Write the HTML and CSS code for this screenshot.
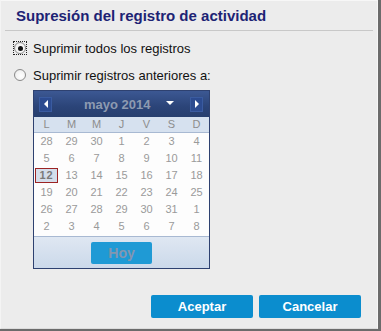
FILE: index.html
```html
<!DOCTYPE html>
<html lang="es">
<head>
<meta charset="utf-8">
<title>Supresión del registro de actividad</title>
<link rel="stylesheet" href="styles.css">
</head>
<body>
<div class="dialog">
  <div class="title">Supresión del registro de actividad</div>
  <div class="sep"></div>
  <div class="options">
    <div class="opt">
      <span class="focus"><span class="radio checked"></span></span>
      <span class="label">Suprimir todos los registros</span>
    </div>
    <div class="opt">
      <span class="nofocus"><span class="radio"></span></span>
      <span class="label">Suprimir registros anteriores a:</span>
    </div>
  </div>
  <div class="cal">
    <div class="cal-head">
      <span class="nav"><svg width="6" height="8" viewBox="0 0 6 8"><path d="M5 0 L1 4 L5 8 Z" fill="#fff"/></svg></span>
      <span class="month">mayo 2014</span>
      <svg class="drop" width="8" height="5" viewBox="0 0 8 5"><path d="M0 0 H8 L4 4 Z" fill="#fff"/></svg>
      <span class="nav next"><svg width="6" height="8" viewBox="0 0 6 8"><path d="M1 0 L5 4 L1 8 Z" fill="#fff"/></svg></span>
    </div>
    <div class="dow">
      <span>L</span><span>M</span><span>M</span><span>J</span><span>V</span><span>S</span><span>D</span>
    </div>
    <div class="days">
      <span>28</span><span>29</span><span>30</span><span>1</span><span>2</span><span>3</span><span>4</span>
      <span>5</span><span>6</span><span>7</span><span>8</span><span>9</span><span>10</span><span>11</span>
      <span class="today">12</span><span>13</span><span>14</span><span>15</span><span>16</span><span>17</span><span>18</span>
      <span>19</span><span>20</span><span>21</span><span>22</span><span>23</span><span>24</span><span>25</span>
      <span>26</span><span>27</span><span>28</span><span>29</span><span>30</span><span>31</span><span>1</span>
      <span>2</span><span>3</span><span>4</span><span>5</span><span>6</span><span>7</span><span>8</span>
    </div>
    <div class="cal-foot">
      <span class="hoy">Hoy</span>
    </div>
  </div>
  <div class="actions">
    <span class="btn">Aceptar</span>
    <span class="btn">Cancelar</span>
  </div>
</div>
</body>
</html>
```
FILE: styles.css
```css
html, body {
  margin: 0;
  padding: 0;
}
body {
  width: 381px;
  height: 331px;
  background: #6b6b6b;
  font-family: "Liberation Sans", Arial, sans-serif;
  overflow: hidden;
}
.dialog {
  box-sizing: border-box;
  width: 378px;
  height: 329px;
  background: #ececec;
  border-top: 1px solid #f7f7f7;
  border-left: 1px solid #f4f4f4;
  border-right: 1px solid #f6f6f6;
  border-bottom: 1px solid #dcdcdc;
  display: flex;
  flex-direction: column;
}
.title {
  padding: 6px 0 0 15px;
  height: 23px;
  box-sizing: border-box;
  font-size: 15px;
  font-weight: bold;
  color: #1d2374;
  line-height: 18px;
}
.sep {
  margin: 6px 4px 0 4px;
  border-top: 1px solid #c8c8c8;
}
.options {
  display: flex;
  flex-direction: column;
  padding: 10px 0 0 12px;
  gap: 13px;
}
.opt {
  display: flex;
  align-items: center;
  height: 14px;
}
.focus, .nofocus {
  width: 14px;
  height: 14px;
  box-sizing: border-box;
  border: 1px dotted transparent;
  display: flex;
  align-items: center;
  justify-content: center;
}
.focus {
  border-color: #222;
}
.radio {
  width: 12px;
  height: 12px;
  box-sizing: border-box;
  border-radius: 50%;
  border: 1px solid #8a8a8a;
  background: radial-gradient(circle at 60% 60%, #ffffff 0%, #f2f2f2 60%, #d8d8d8 100%);
  display: flex;
  align-items: center;
  justify-content: center;
}
.radio.checked::after {
  content: "";
  width: 5px;
  height: 5px;
  border-radius: 50%;
  background: #111;
}
.label {
  margin-left: 6px;
  font-size: 13px;
  color: #111;
}
.cal {
  margin: 8px 0 0 32px;
  width: 177px;
  box-sizing: border-box;
  border: 1px solid #2e4170;
  background: #fdfdfd;
}
.cal-head {
  height: 26px;
  background: linear-gradient(#3c5893, #2b4478 60%, #263e6e);
  display: flex;
  align-items: center;
  padding: 0 6px 0 5px;
  white-space: nowrap;
}
.nav {
  flex-shrink: 0;
  width: 13px;
  height: 15px;
  background: #2c4b90;
  border: 1px solid #3a5ba0;
  box-sizing: border-box;
  display: flex;
  align-items: center;
  justify-content: center;
}
.month {
  flex-shrink: 0;
  margin-left: 32px;
  font-size: 13px;
  font-weight: bold;
  color: #8d9ab1;
}
.drop {
  flex-shrink: 0;
  margin: 0 0 2px 15px;
}
.nav.next {
  margin-left: auto;
}
.dow {
  display: grid;
  grid-template-columns: repeat(7, 25px);
  height: 15px;
  background: #d6e1ef;
  border-bottom: 1px solid #a8b9d2;
  font-size: 11px;
  line-height: 15px;
  color: #8d8d8d;
  text-align: center;
}
.days {
  display: grid;
  grid-template-columns: repeat(7, 25px);
  grid-auto-rows: 17px;
  font-size: 11px;
  line-height: 17px;
  color: #9a9a9a;
  text-align: center;
  padding-bottom: 1px;
}
.days span {
  display: flex;
  align-items: center;
  justify-content: center;
}
.days .today {
  margin: 1px 0 1px 1px;
  width: 23px;
  box-sizing: border-box;
  border: 1px solid #9c2424;
  background: #d4deeb;
  font-weight: bold;
  color: #7a7a7a;
  letter-spacing: 1px;
}
.cal-foot {
  height: 31px;
  border-top: 1px solid #a8b9d2;
  background: linear-gradient(#dfe7f2, #cbd9ea);
  display: flex;
  justify-content: center;
  align-items: center;
}
.hoy {
  width: 61px;
  height: 22px;
  background: #1f9ad5;
  border-radius: 2px;
  color: #8396b0;
  font-weight: bold;
  font-size: 14px;
  line-height: 22px;
  text-align: center;
}
.actions {
  margin-top: auto;
  display: flex;
  justify-content: flex-end;
  gap: 6px;
  padding: 0 16px 10px 0;
}
.btn {
  width: 102px;
  height: 23px;
  background: #0b8dce;
  border-radius: 2px;
  color: #fff;
  font-weight: bold;
  font-size: 13px;
  line-height: 23px;
  text-align: center;
}
```
